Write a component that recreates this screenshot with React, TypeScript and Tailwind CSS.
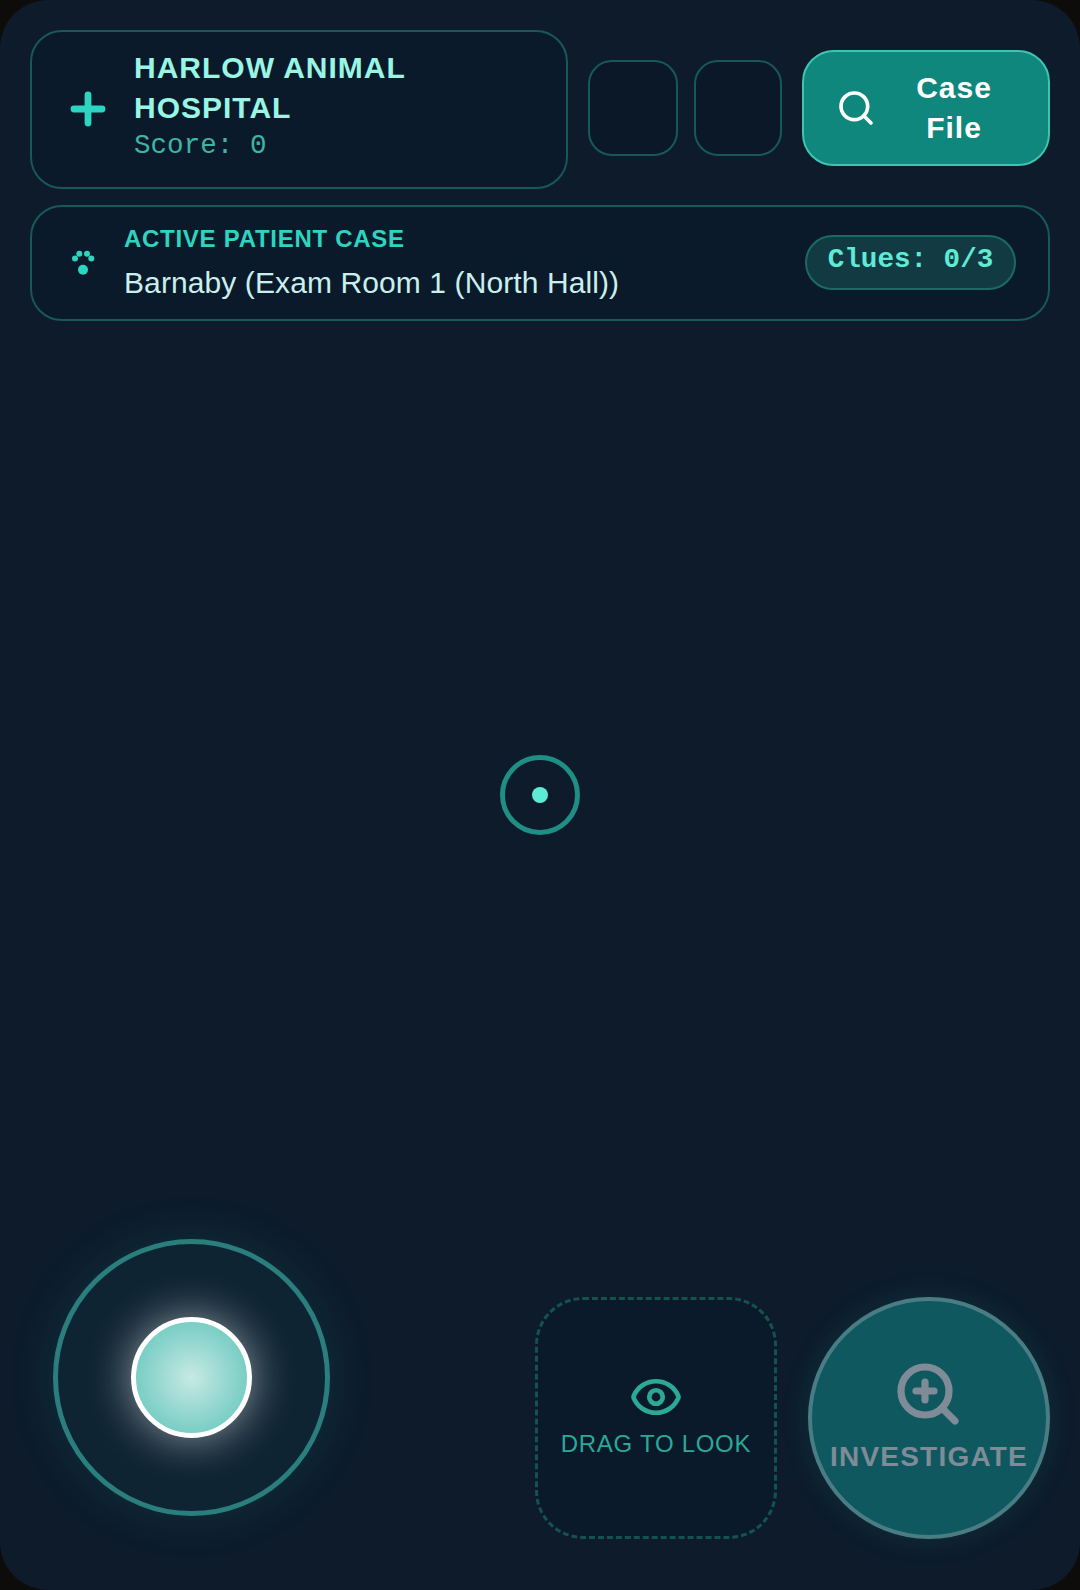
import { Eye, Plus, Search, ZoomIn } from "lucide-react"

const sans = "font-['Liberation_Sans',Arial,sans-serif]"
const mono = "font-['Liberation_Mono','Courier_New',monospace]"

function PawIcon() {
  return (
    <svg viewBox="0 0 40 40" className="h-10 w-10 shrink-0" fill="#2dd4bf">
      <circle cx="12" cy="15.5" r="3" />
      <circle cx="16.3" cy="10.8" r="3" />
      <circle cx="24" cy="10.8" r="3" />
      <circle cx="28.3" cy="15.5" r="3" />
      <circle cx="20" cy="26.8" r="5" />
    </svg>
  )
}

export default function App() {
  return (
    <div className={`h-[1590px] w-[1080px] overflow-hidden bg-[#0d0c0b] ${sans}`}>
      <div className="relative flex h-full flex-col rounded-[48px] bg-[#0d1b2b] px-[30px] pb-[51px] pt-[30px]">
        {/* Header */}
        <div className="flex items-start">
          <div className="flex h-[159px] w-[538px] items-center gap-[22px] rounded-[32px] border-2 border-[#18585b] bg-[#0b1a2a] pl-[32px]">
            <Plus size={48} strokeWidth={3.4} color="#2dd4bf" className="mb-[2px] shrink-0" />
            <div className="w-[360px] pb-[8px]">
              <div className="text-[30px] font-bold leading-[40px] tracking-[1px] text-[#99f6e4]">
                HARLOW ANIMAL HOSPITAL
              </div>
              <div className={`text-[27.6px] leading-[36px] text-[#3db5a6] ${mono}`}>Score: 0</div>
            </div>
          </div>

          <div className="ml-[20px] mt-[30px] flex gap-[16px]">
            <div className="h-[96px] w-[90px] rounded-[24px] border-2 border-[#18585b] bg-[#0a1828]" />
            <div className="h-[96px] w-[88px] rounded-[24px] border-2 border-[#18585b] bg-[#0a1828]" />
          </div>

          <button className="ml-[20px] mt-[20px] flex h-[116px] w-[248px] items-center gap-[20px] rounded-[32px] border-2 border-[#3ec5b0] bg-[#0f877d] pl-[32px] pr-[36px] text-white">
            <Search size={40} strokeWidth={2.2} className="shrink-0" />
            <span className="flex-1 text-center text-[30px] font-bold leading-[40px] tracking-[1px]">Case File</span>
          </button>
        </div>

        {/* Active case */}
        <div className="mt-[16px] flex h-[116px] items-center rounded-[32px] border-2 border-[#18585b] bg-[#0b1a2a] pl-[31px] pr-[32px]">
          <PawIcon />
          <div className="ml-[21px] flex-1">
            <div className="text-[24px] font-bold leading-[34px] tracking-[0.72px] text-[#2dd4bf]">ACTIVE PATIENT CASE</div>
            <div className="mt-[5px] text-[30px] leading-[44px] tracking-[0.1px] text-[#c9f0ec]">Barnaby (Exam Room 1 (North Hall))</div>
          </div>
          <div className={`mb-[2px] flex h-[55px] w-[211px] items-center justify-center rounded-full border-2 border-[#1b6a68] bg-[#123a42] pb-[4px] text-[27.6px] font-bold text-[#5eead4] ${mono}`}>
            Clues: 0/3
          </div>
        </div>

        {/* Crosshair */}
        <div className="absolute left-[500px] top-[755px] flex h-20 w-20 items-center justify-center rounded-full border-[5px] border-[#1f8f85]">
          <div className="h-4 w-4 rounded-full bg-[#5eead4]" />
        </div>

        {/* Controls */}
        <div className="mt-auto flex items-end justify-between">
          <div className="mb-[23px] ml-[23px] flex h-[277px] w-[277px] items-center justify-center rounded-full border-[5px] border-[#2a7f7e] bg-[#0f2433] shadow-[0_0_50px_rgba(45,212,191,0.12)]">
            <div className="h-[121px] w-[121px] rounded-full border-[5px] border-white bg-[radial-gradient(circle,#c8e9e5_0%,#7fd0c7_65%,#6cc7bd_100%)] shadow-[0_0_44px_rgba(255,255,255,0.55)]" />
          </div>

          <div className="flex gap-[31px]">
            <div className="flex h-[242px] w-[242px] flex-col items-center justify-center rounded-[48px] border-[3px] border-dashed border-[#14524f] bg-[#0b1a2a] text-[#2ba898]">
              <Eye size={54} strokeWidth={2.1} className="-mt-[4px]" />
              <div className="mt-[2px] text-[24px] leading-[36px] tracking-[0.72px]">DRAG TO LOOK</div>
            </div>

            <div className="flex h-[242px] w-[242px] flex-col items-center justify-center rounded-full border-[4px] border-[#4a7d83] bg-[#0f5860] pt-[6px] text-[#7f8c98] shadow-[0_0_30px_rgba(45,212,191,0.12)]">
              <ZoomIn size={72} strokeWidth={2.4} className="-mt-[8px] ml-[-2px]" />
              <div className="mt-[8px] text-[28px] font-bold leading-[38px] tracking-[1.2px]">INVESTIGATE</div>
            </div>
          </div>
        </div>
      </div>
    </div>
  )
}
